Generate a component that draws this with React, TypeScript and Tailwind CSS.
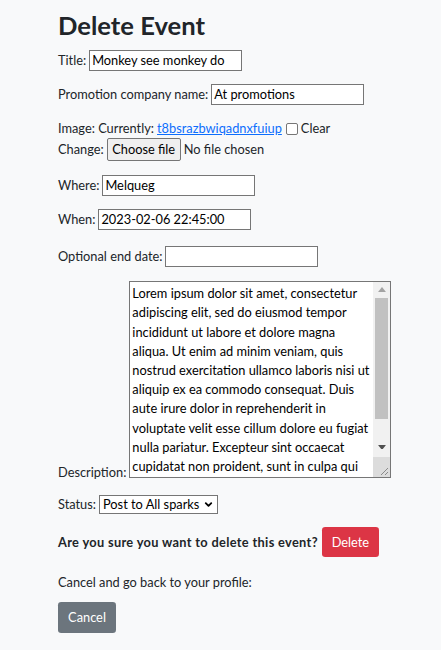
import { ChevronDown } from "lucide-react";

const lorem = [
  "Lorem ipsum dolor sit amet, consectetur",
  "adipiscing elit, sed do eiusmod tempor",
  "incididunt ut labore et dolore magna",
  "aliqua. Ut enim ad minim veniam, quis",
  "nostrud exercitation ullamco laboris nisi ut",
  "aliquip ex ea commodo consequat. Duis",
  "aute irure dolor in reprehenderit in",
  "voluptate velit esse cillum dolore eu fugiat",
  "nulla pariatur. Excepteur sint occaecat",
  "cupidatat non proident, sunt in culpa qui",
];

function TextInput({ value = "" }: { value?: string }) {
  return (
    <div className="flex h-[21px] w-[153px] items-center border border-[#767676] bg-white px-[2px] text-black">
      <span className="whitespace-nowrap">{value}</span>
    </div>
  );
}

function FakeTextarea() {
  return (
    <div className="flex h-[197px] w-[262px] overflow-hidden border border-[#767676] bg-white">
      <div className="flex-1 overflow-hidden pl-[2px] pt-[2px] leading-[19.2px] text-black">
        {lorem.map((line) => (
          <div key={line} className="whitespace-nowrap">
            {line}
          </div>
        ))}
      </div>
      <div className="relative flex w-[17px] flex-col items-center bg-[#f1f1f1]">
        <svg width="8" height="5" viewBox="0 0 8 5" className="mt-[5px]">
          <path d="M0 5 L4 0 L8 5 Z" fill="#a3a3a3" />
        </svg>
        <div className="mt-[6px] h-[122px] w-[13px] bg-[#c1c1c1]" />
        <svg width="8" height="5" viewBox="0 0 8 5" className="mt-[26px]">
          <path d="M0 0 L8 0 L4 5 Z" fill="#505050" />
        </svg>
        <div className="mt-[8px] h-[20px] w-full bg-[#dcdcdc]" />
        <svg width="10" height="10" viewBox="0 0 10 10" className="absolute bottom-[1px] right-[1px]">
          <path d="M9 2 L2 9 M9 6 L6 9" stroke="#8a8a8a" strokeWidth="1" />
        </svg>
      </div>
    </div>
  );
}

export default function App() {
  return (
    <div
      className="min-h-[650px] bg-[#f8f9fa] pl-[58px] text-[12.8px] leading-[19.2px] text-[#212529]"
      style={{ fontFamily: 'Lato, "Noto Sans", sans-serif' }}
    >
      <h2 className="pt-[10px] text-[25.6px] font-bold leading-[31px]">Delete Event</h2>

      <div className="mt-[9px] flex items-center gap-[3px]">
        <span>Title:</span>
        <TextInput value="Monkey see monkey do" />
      </div>

      <div className="mt-[13px] flex items-center gap-[3px]">
        <span>Promotion company name:</span>
        <TextInput value="At promotions" />
      </div>

      <div className="mt-[14px] flex items-center gap-[3px]">
        <span>Image: Currently:</span>
        <a href="#" className="text-[#0d6efd] underline">
          t8bsrazbwiqadnxfuiup
        </a>
        <span className="ml-[1px] inline-block h-[12px] w-[12px] rounded-[2px] border border-[#767676] bg-white" />
        <span>Clear</span>
      </div>
      <div className="flex items-center gap-[3px]">
        <span>Change:</span>
        <span className="flex h-[23px] w-[74px] items-center justify-center rounded-[2px] border border-[#767676] bg-[#efefef] text-black">
          Choose file
        </span>
        <span>No file chosen</span>
      </div>

      <div className="mt-[14px] flex items-center gap-[3px]">
        <span>Where:</span>
        <TextInput value="Melqueg" />
      </div>

      <div className="mt-[13px] flex items-center gap-[3px]">
        <span>When:</span>
        <TextInput value="2023-02-06 22:45:00" />
      </div>

      <div className="mt-[16px] flex items-center gap-[3px]">
        <span>Optional end date:</span>
        <TextInput />
      </div>

      <div className="mt-[14px] flex items-end gap-[3px]">
        <span className="mb-[-4px]">Description:</span>
        <FakeTextarea />
      </div>

      <div className="mt-[17px] flex items-center gap-[3px]">
        <span>Status:</span>
        <div className="flex h-[19px] w-[119px] items-center justify-between border border-[#767676] bg-white pl-[3px] pr-[3px] text-black">
          <span className="whitespace-nowrap">Post to All sparks</span>
          <ChevronDown size={11} strokeWidth={4} color="#000" />
        </div>
      </div>

      <div className="mt-[13px] flex items-center gap-[4px]">
        <span className="font-bold tracking-[0.33px]">Are you sure you want to delete this event?</span>
        <button className="h-[30px] w-[57px] rounded-[3.2px] bg-[#dc3545] text-white">Delete</button>
      </div>

      <div className="mt-[16px]">Cancel and go back to your profile:</div>

      <button className="mt-[9px] h-[31px] w-[58px] rounded-[3.2px] bg-[#6c757d] text-white">Cancel</button>
    </div>
  );
}
